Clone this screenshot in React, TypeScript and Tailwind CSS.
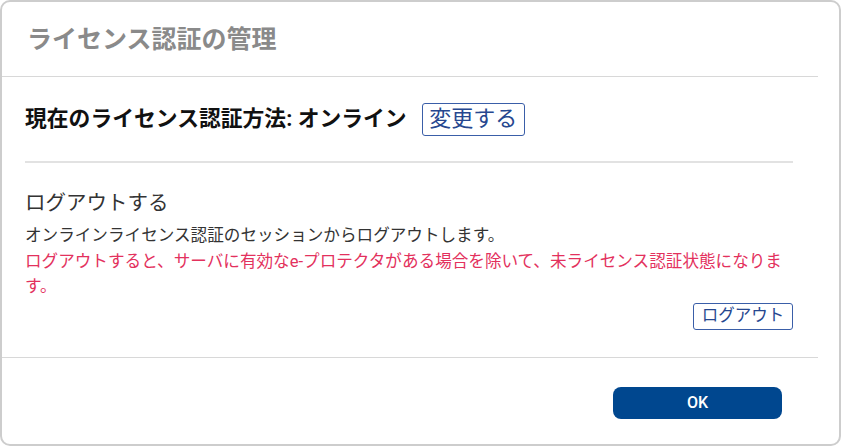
import React from "react";

const jp = { fontFamily: 'Roboto, "Noto Sans CJK JP", sans-serif' };

export default function App() {
  return (
    <div className="w-[841px] h-[446px] bg-white" style={jp}>
      <div className="w-[841px] h-[446px] border-2 border-[#cdcdcd] rounded-[10px] bg-white flex flex-col">
        <div className="h-[74px] flex items-center pl-[25px]">
          <h1 className="text-[25px] leading-none font-bold text-[#8a8a8a]">ライセンス認証の管理</h1>
        </div>
        <div className="h-px bg-[#d8d8d8] mr-[21px]" />
        <div className="h-[280px] pl-[23px] pr-[46px] flex flex-col">
          <div className="mt-[25px] flex items-center h-[34px]">
            <span className="text-[21.8px] font-bold text-[#111]">現在のライセンス認証方法: オンライン</span>
            <button className="ml-[15px] h-[33px] w-[103px] border border-[#3a5ea8] rounded-[3px] text-[22px] leading-none text-[#26478f] flex items-center justify-center">
              変更する
            </button>
          </div>
          <div className="mt-[25px] h-[2px] bg-[#e2e2e2]" />
          <div className="mt-[26px] text-[20.5px] leading-[28px] text-[#333]">ログアウトする</div>
          <div className="mt-[6px] text-[16.6px] leading-[26px] text-[#333]">
            オンラインライセンス認証のセッションからログアウトします。
          </div>
          <div className="text-[16.6px] leading-[25px] text-[#e3315d]">
            ログアウトすると、サーバに有効なe-プロテクタがある場合を除いて、未ライセンス認証状態になります。
          </div>
          <div className="mt-[4px] flex justify-end">
            <button className="h-[27px] w-[100px] border border-[#3a5ea8] rounded-[3px] text-[16.5px] leading-none text-[#26478f] flex items-center justify-center">
              ログアウト
            </button>
          </div>
        </div>
        <div className="h-px bg-[#d8d8d8] mr-[21px]" />
        <div className="flex-1 flex justify-end items-start pr-[57px] pt-[29px]">
          <button className="w-[169px] h-[32px] rounded-[8px] bg-[#00478f] text-white text-[16px] font-medium flex items-center justify-center">
            OK
          </button>
        </div>
      </div>
    </div>
  );
}
